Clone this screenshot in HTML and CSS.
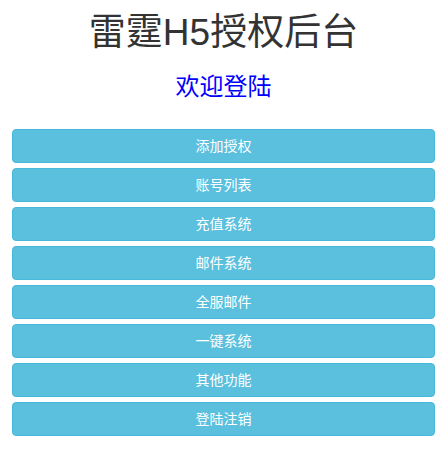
FILE: index.html
```html
<!DOCTYPE html>
<html lang="zh-CN">
<head>
<meta charset="utf-8">
<title>雷霆H5授权后台</title>
<link rel="stylesheet" href="styles.css">
</head>
<body>
<div class="page">
  <h1 class="title">雷霆H5授权后台</h1>
  <h2 class="welcome">欢迎登陆</h2>
  <div class="menu">
    <button class="btn">添加授权</button>
    <button class="btn">账号列表</button>
    <button class="btn">充值系统</button>
    <button class="btn">邮件系统</button>
    <button class="btn">全服邮件</button>
    <button class="btn">一键系统</button>
    <button class="btn">其他功能</button>
    <button class="btn">登陆注销</button>
  </div>
</div>
</body>
</html>
```
FILE: styles.css
```css
html, body {
  margin: 0;
  padding: 0;
  background: #fff;
}
body {
  font-family: "Liberation Sans", "Noto Sans CJK SC", sans-serif;
  color: #333;
}
.page {
  padding: 0 12px;
}
.title {
  margin: 0;
  padding-top: 10px;
  font-size: 37px;
  font-weight: normal;
  line-height: 46px;
  text-align: center;
  color: #333;
}
.welcome {
  margin: 0;
  padding-top: 16px;
  font-size: 24px;
  font-weight: normal;
  line-height: 30px;
  text-align: center;
  color: #0000ff;
}
.menu {
  margin-top: 27px;
  display: flex;
  flex-direction: column;
  gap: 5px;
}
.btn {
  display: block;
  width: 100%;
  height: 34px;
  margin: 0;
  padding: 0;
  border: 1px solid #46b8da;
  border-radius: 4px;
  background: #5bc0de;
  color: #fff;
  font-family: "Liberation Sans", "Noto Sans CJK SC", sans-serif;
  font-size: 14px;
  line-height: 20px;
  text-align: center;
}
```
